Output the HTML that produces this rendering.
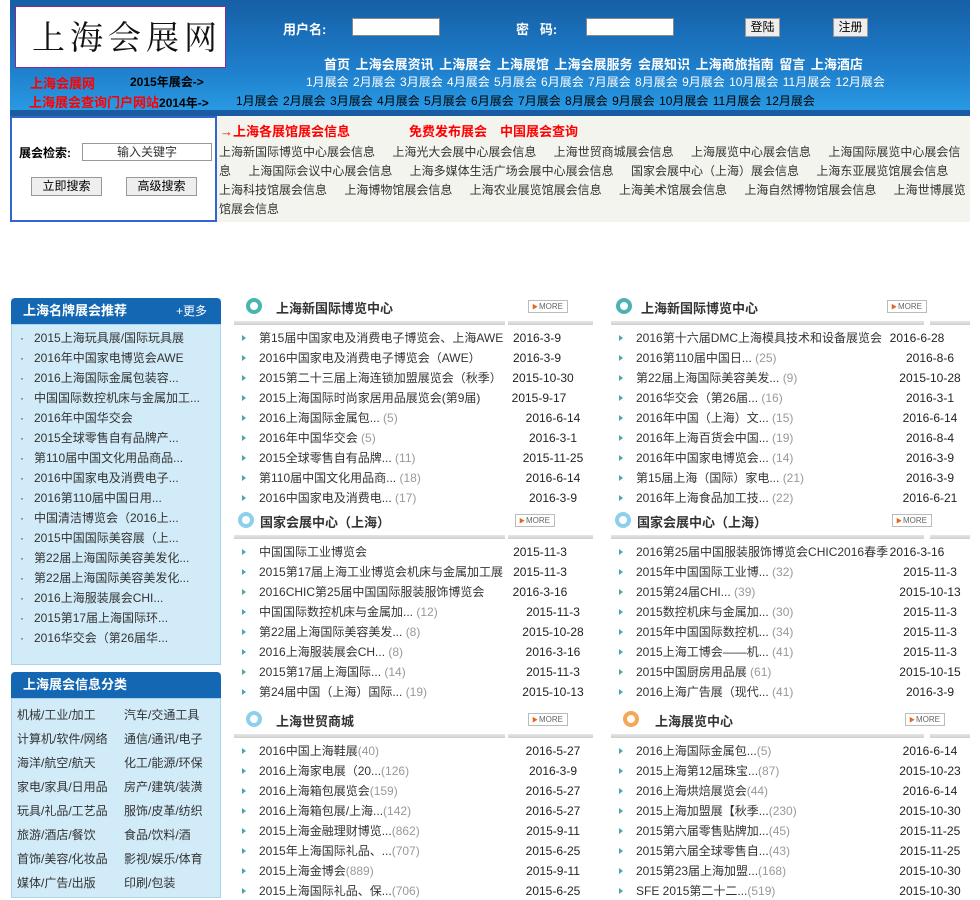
<!DOCTYPE html>
<html><head><meta charset="utf-8">
<style>
*{margin:0;padding:0;box-sizing:border-box}
body{width:980px;height:891px;overflow:hidden;background:#fff;font-family:"Liberation Sans","Noto Sans CJK SC","WenQuanYi Zen Hei",sans-serif;font-size:12px;color:#333;position:relative}
.a{position:absolute;white-space:nowrap}
#hd{position:absolute;left:10px;top:0;width:960px;height:116px;background:linear-gradient(#155fa5,#1f7fcc 60%,#2a9de6 100%)}
#hd .strip{position:absolute;left:0;top:110px;width:960px;height:6px;background:#1a5ca2}
.w{color:#fff;font-weight:bold}
.inp{position:absolute;background:#fff;border:1px solid #888;height:18px}
.btn{position:absolute;background:#eee;border:1px solid #999;font-size:12px;text-align:center;line-height:17px;color:#000}
.lbox{position:absolute;left:11px;width:210px;background:#d1ebf8;border:1px solid #aad3ee}
.lhd{position:absolute;left:11px;width:210px;height:26px;background:#1467b3;border-radius:4px 4px 0 0;color:#fff;font-weight:bold;font-size:13px;line-height:26px;padding-left:12px}
.sec{position:absolute;width:360px}
.ico{position:absolute;width:16px;height:16px;border-radius:50%;border:4px solid #4bb3b0;background:#fff}
.tt{position:absolute;font-weight:bold;font-size:13px;color:#333}
.more{position:absolute;width:40px;height:13px;border:1px solid #bbb;background:#fff;font-size:8px;line-height:11px;color:#666;padding-left:3px}
.more:before{content:"▶";color:#e8651c;font-size:6px;margin-right:1px}
.ln{position:absolute;height:4px;background:linear-gradient(#e6e6e6,#cfcfcf)}
.it{position:absolute;left:25px;font-size:12px;color:#333;line-height:17px;white-space:nowrap}
.it:before{content:"";position:absolute;left:-17px;top:5px;border-left:4px solid #4aa9a7;border-top:3px solid transparent;border-bottom:3px solid transparent}
.it i{font-style:normal;color:#999}
.d{position:absolute;width:100px;text-align:center;font-size:12px;color:#222;line-height:17px}
</style></head><body>
<div id="hd"><div class="strip"></div></div>
<div class="a" style="left:15px;top:6px;width:211px;height:62px;background:#fff;border:1px solid #8a2b8a;font-family:'Noto Serif CJK SC',serif;font-size:33px;line-height:58px;letter-spacing:5px;padding-left:16px;color:#111;overflow:hidden">上海会展网</div>
<div class="a w" style="left:283px;top:19px;font-size:13px">用户名:</div>
<div class="inp" style="left:352px;top:18px;width:88px"></div>
<div class="a w" style="left:516px;top:19px;font-size:13px">密&nbsp;&nbsp;&nbsp;码:</div>
<div class="inp" style="left:586px;top:18px;width:88px"></div>
<div class="btn" style="left:745px;top:18px;width:35px;height:19px">登陆</div>
<div class="btn" style="left:833px;top:18px;width:35px;height:19px">注册</div>
<div class="a w" style="left:324px;top:54px;font-size:13px;word-spacing:2px">首页 上海会展资讯 上海展会 上海展馆 上海会展服务 会展知识 上海商旅指南 留言 上海酒店</div>
<div class="a" style="left:30px;top:73px;color:#f00;font-weight:bold;font-size:13px">上海会展网</div>
<div class="a" style="left:130px;top:73px;color:#000;font-weight:bold;font-size:12px">2015年展会-&gt;</div>
<div class="a" style="left:306px;top:73px;color:#fff;font-size:12px;word-spacing:1px">1月展会 2月展会 3月展会 4月展会 5月展会 6月展会 7月展会 8月展会 9月展会 10月展会 11月展会 12月展会</div>
<div class="a" style="left:29px;top:92px;color:#f00;font-weight:bold;font-size:13px">上海展会查询门户网站<span style="color:#000;font-size:12px">2014年-&gt;</span></div>
<div class="a" style="left:236px;top:92px;color:#000;font-size:12px;word-spacing:1px">1月展会 2月展会 3月展会 4月展会 5月展会 6月展会 7月展会 8月展会 9月展会 10月展会 11月展会 12月展会</div>

<div class="a" style="left:10px;top:116px;width:207px;height:106px;border:2px solid #3366cc;background:#fff"></div>
<div class="a" style="left:19px;top:144px;font-weight:bold;color:#000;font-size:12px">展会检索:</div>
<div class="a" style="left:82px;top:143px;width:130px;height:18px;border:1px solid #999;text-align:center;line-height:16px;color:#333">输入关键字</div>
<div class="btn" style="left:31px;top:177px;width:71px;height:19px">立即搜索</div>
<div class="btn" style="left:126px;top:177px;width:71px;height:19px">高级搜索</div>
<div class="a" style="left:217px;top:116px;width:753px;height:106px;background:#f4f4ef"></div>
<div class="a" style="left:220px;top:121px;color:#f00;font-weight:bold;font-size:13px">→上海各展馆展会信息</div>
<div class="a" style="left:409px;top:121px;color:#f00;font-weight:bold;font-size:13px">免费发布展会</div>
<div class="a" style="left:500px;top:121px;color:#f00;font-weight:bold;font-size:13px">中国展会查询</div>
<div class="a" style="left:219px;top:143px;width:750px;white-space:normal;line-height:19px;color:#333;word-spacing:14px;font-size:12px">上海新国际博览中心展会信息 上海光大会展中心展会信息 上海世贸商城展会信息 上海展览中心展会信息 上海国际展览中心展会信息 上海国际会议中心展会信息 上海多媒体生活广场会展中心展会信息 国家会展中心（上海）展会信息 上海东亚展览馆展会信息 上海科技馆展会信息 上海博物馆展会信息 上海农业展览馆展会信息 上海美术馆展会信息 上海自然博物馆展会信息 上海世博展览馆展会信息</div>

<div class="lhd" style="top:298px">上海名牌展会推荐<span style="position:absolute;right:14px;font-weight:normal;font-size:12px">+更多</span></div>
<div class="lbox" style="top:324px;height:341px"></div>
<div class="a" style="left:20px;top:328px;line-height:20px;font-size:12px;color:#333">
·&nbsp;&nbsp;&nbsp;2015上海玩具展/国际玩具展<br>·&nbsp;&nbsp;&nbsp;2016年中国家电博览会AWE<br>·&nbsp;&nbsp;&nbsp;2016上海国际金属包装容...<br>·&nbsp;&nbsp;&nbsp;中国国际数控机床与金属加工...<br>·&nbsp;&nbsp;&nbsp;2016年中国华交会<br>·&nbsp;&nbsp;&nbsp;2015全球零售自有品牌产...<br>·&nbsp;&nbsp;&nbsp;第110届中国文化用品商品...<br>·&nbsp;&nbsp;&nbsp;2016中国家电及消费电子...<br>·&nbsp;&nbsp;&nbsp;2016第110届中国日用...<br>·&nbsp;&nbsp;&nbsp;中国清洁博览会（2016上...<br>·&nbsp;&nbsp;&nbsp;2015中国国际美容展（上...<br>·&nbsp;&nbsp;&nbsp;第22届上海国际美容美发化...<br>·&nbsp;&nbsp;&nbsp;第22届上海国际美容美发化...<br>·&nbsp;&nbsp;&nbsp;2016上海服装展会CHI...<br>·&nbsp;&nbsp;&nbsp;2015第17届上海国际环...<br>·&nbsp;&nbsp;&nbsp;2016华交会（第26届华...</div>
<div class="lhd" style="top:672px">上海展会信息分类</div>
<div class="lbox" style="top:698px;height:200px"></div>
<div class="a" style="left:17px;top:703px;line-height:24px;font-size:12px;color:#333">机械/工业/加工<br>计算机/软件/网络<br>海洋/航空/航天<br>家电/家具/日用品<br>玩具/礼品/工艺品<br>旅游/酒店/餐饮<br>首饰/美容/化妆品<br>媒体/广告/出版</div>
<div class="a" style="left:124px;top:703px;line-height:24px;font-size:12px;color:#333">汽车/交通工具<br>通信/通讯/电子<br>化工/能源/环保<br>房产/建筑/装潢<br>服饰/皮革/纺织<br>食品/饮料/酒<br>影视/娱乐/体育<br>印刷/包装</div>

<div class="ico" style="left:246px;top:298px"></div><div class="tt" style="left:276px;top:298px">上海新国际博览中心</div><div class="more" style="left:528px;top:300px">MORE</div>
<div class="ln" style="left:234px;top:321px;width:271px"></div><div class="ln" style="left:508px;top:321px;width:85px"></div>
<div class="sec" style="left:234px;top:330px">
<div class="it" style="top:0">第15届中国家电及消费电子博览会、上海AWE</div><div class="d" style="left:253px;top:0">2016-3-9</div>
<div class="it" style="top:20px">2016中国家电及消费电子博览会（AWE）</div><div class="d" style="left:253px;top:20px">2016-3-9</div>
<div class="it" style="top:40px">2015第二十三届上海连锁加盟展览会（秋季）</div><div class="d" style="left:259px;top:40px">2015-10-30</div>
<div class="it" style="top:60px">2015上海国际时尚家居用品展览会(第9届)</div><div class="d" style="left:255px;top:60px">2015-9-17</div>
<div class="it" style="top:80px">2016上海国际金属包... <i>(5)</i></div><div class="d" style="left:269px;top:80px">2016-6-14</div>
<div class="it" style="top:100px">2016年中国华交会 <i>(5)</i></div><div class="d" style="left:269px;top:100px">2016-3-1</div>
<div class="it" style="top:120px">2015全球零售自有品牌... <i>(11)</i></div><div class="d" style="left:269px;top:120px">2015-11-25</div>
<div class="it" style="top:140px">第110届中国文化用品商... <i>(18)</i></div><div class="d" style="left:269px;top:140px">2016-6-14</div>
<div class="it" style="top:160px">2016中国家电及消费电... <i>(17)</i></div><div class="d" style="left:269px;top:160px">2016-3-9</div>
</div>
<div class="ico" style="left:238px;top:512px;border-color:#8cd0ec"></div><div class="tt" style="left:260px;top:512px">国家会展中心（上海）</div><div class="more" style="left:515px;top:514px">MORE</div>
<div class="ln" style="left:234px;top:535px;width:271px"></div><div class="ln" style="left:508px;top:535px;width:85px"></div>
<div class="sec" style="left:234px;top:544px">
<div class="it" style="top:0">中国国际工业博览会</div><div class="d" style="left:256px;top:0">2015-11-3</div>
<div class="it" style="top:20px">2015第17届上海工业博览会机床与金属加工展</div><div class="d" style="left:256px;top:20px">2015-11-3</div>
<div class="it" style="top:40px">2016CHIC第25届中国国际服装服饰博览会</div><div class="d" style="left:256px;top:40px">2016-3-16</div>
<div class="it" style="top:60px">中国国际数控机床与金属加... <i>(12)</i></div><div class="d" style="left:269px;top:60px">2015-11-3</div>
<div class="it" style="top:80px">第22届上海国际美容美发... <i>(8)</i></div><div class="d" style="left:269px;top:80px">2015-10-28</div>
<div class="it" style="top:100px">2016上海服装展会CH... <i>(8)</i></div><div class="d" style="left:269px;top:100px">2016-3-16</div>
<div class="it" style="top:120px">2015第17届上海国际... <i>(14)</i></div><div class="d" style="left:269px;top:120px">2015-11-3</div>
<div class="it" style="top:140px">第24届中国（上海）国际... <i>(19)</i></div><div class="d" style="left:269px;top:140px">2015-10-13</div>
</div>
<div class="ico" style="left:246px;top:711px;border-color:#8cd0ec"></div><div class="tt" style="left:276px;top:711px">上海世贸商城</div><div class="more" style="left:528px;top:713px">MORE</div>
<div class="ln" style="left:234px;top:734px;width:271px"></div><div class="ln" style="left:508px;top:734px;width:85px"></div>
<div class="sec" style="left:234px;top:743px">
<div class="it" style="top:0">2016中国上海鞋展<i>(40)</i></div><div class="d" style="left:269px;top:0">2016-5-27</div>
<div class="it" style="top:20px">2016上海家电展（20...<i>(126)</i></div><div class="d" style="left:269px;top:20px">2016-3-9</div>
<div class="it" style="top:40px">2016上海箱包展览会<i>(159)</i></div><div class="d" style="left:269px;top:40px">2016-5-27</div>
<div class="it" style="top:60px">2016上海箱包展/上海...<i>(142)</i></div><div class="d" style="left:269px;top:60px">2016-5-27</div>
<div class="it" style="top:80px">2015上海金融理财博览...<i>(862)</i></div><div class="d" style="left:269px;top:80px">2015-9-11</div>
<div class="it" style="top:100px">2015年上海国际礼品、...<i>(707)</i></div><div class="d" style="left:269px;top:100px">2015-6-25</div>
<div class="it" style="top:120px">2015上海金博会<i>(889)</i></div><div class="d" style="left:269px;top:120px">2015-9-11</div>
<div class="it" style="top:140px">2015上海国际礼品、保...<i>(706)</i></div><div class="d" style="left:269px;top:140px">2015-6-25</div>
</div>

<div class="ico" style="left:616px;top:298px"></div><div class="tt" style="left:641px;top:298px">上海新国际博览中心</div><div class="more" style="left:887px;top:300px">MORE</div>
<div class="ln" style="left:611px;top:321px;width:313px"></div><div class="ln" style="left:930px;top:321px;width:40px"></div>
<div class="sec" style="left:611px;top:330px">
<div class="it" style="top:0">2016第十六届DMC上海模具技术和设备展览会</div><div class="d" style="left:256px;top:0">2016-6-28</div>
<div class="it" style="top:20px">2016第110届中国日... <i>(25)</i></div><div class="d" style="left:269px;top:20px">2016-8-6</div>
<div class="it" style="top:40px">第22届上海国际美容美发... <i>(9)</i></div><div class="d" style="left:269px;top:40px">2015-10-28</div>
<div class="it" style="top:60px">2016华交会（第26届... <i>(16)</i></div><div class="d" style="left:269px;top:60px">2016-3-1</div>
<div class="it" style="top:80px">2016年中国（上海）文... <i>(15)</i></div><div class="d" style="left:269px;top:80px">2016-6-14</div>
<div class="it" style="top:100px">2016年上海百货会中国... <i>(19)</i></div><div class="d" style="left:269px;top:100px">2016-8-4</div>
<div class="it" style="top:120px">2016年中国家电博览会... <i>(14)</i></div><div class="d" style="left:269px;top:120px">2016-3-9</div>
<div class="it" style="top:140px">第15届上海（国际）家电... <i>(21)</i></div><div class="d" style="left:269px;top:140px">2016-3-9</div>
<div class="it" style="top:160px">2016年上海食品加工技... <i>(22)</i></div><div class="d" style="left:269px;top:160px">2016-6-21</div>
</div>
<div class="ico" style="left:615px;top:512px;border-color:#8cd0ec"></div><div class="tt" style="left:637px;top:512px">国家会展中心（上海）</div><div class="more" style="left:892px;top:514px">MORE</div>
<div class="ln" style="left:611px;top:535px;width:313px"></div><div class="ln" style="left:930px;top:535px;width:40px"></div>
<div class="sec" style="left:611px;top:544px">
<div class="it" style="top:0">2016第25届中国服装服饰博览会CHIC2016春季</div><div class="d" style="left:256px;top:0">2016-3-16</div>
<div class="it" style="top:20px">2015年中国国际工业博... <i>(32)</i></div><div class="d" style="left:269px;top:20px">2015-11-3</div>
<div class="it" style="top:40px">2015第24届CHI... <i>(39)</i></div><div class="d" style="left:269px;top:40px">2015-10-13</div>
<div class="it" style="top:60px">2015数控机床与金属加... <i>(30)</i></div><div class="d" style="left:269px;top:60px">2015-11-3</div>
<div class="it" style="top:80px">2015年中国国际数控机... <i>(34)</i></div><div class="d" style="left:269px;top:80px">2015-11-3</div>
<div class="it" style="top:100px">2015上海工博会——机... <i>(41)</i></div><div class="d" style="left:269px;top:100px">2015-11-3</div>
<div class="it" style="top:120px">2015中国厨房用品展 <i>(61)</i></div><div class="d" style="left:269px;top:120px">2015-10-15</div>
<div class="it" style="top:140px">2016上海广告展（现代... <i>(41)</i></div><div class="d" style="left:269px;top:140px">2016-3-9</div>
</div>
<div class="ico" style="left:623px;top:711px;border-color:#f5a755"></div><div class="tt" style="left:655px;top:711px">上海展览中心</div><div class="more" style="left:905px;top:713px">MORE</div>
<div class="ln" style="left:611px;top:734px;width:313px"></div><div class="ln" style="left:930px;top:734px;width:40px"></div>
<div class="sec" style="left:611px;top:743px">
<div class="it" style="top:0">2016上海国际金属包...<i>(5)</i></div><div class="d" style="left:269px;top:0">2016-6-14</div>
<div class="it" style="top:20px">2015上海第12届珠宝...<i>(87)</i></div><div class="d" style="left:269px;top:20px">2015-10-23</div>
<div class="it" style="top:40px">2016上海烘焙展览会<i>(44)</i></div><div class="d" style="left:269px;top:40px">2016-6-14</div>
<div class="it" style="top:60px">2015上海加盟展【秋季...<i>(230)</i></div><div class="d" style="left:269px;top:60px">2015-10-30</div>
<div class="it" style="top:80px">2015第六届零售贴牌加...<i>(45)</i></div><div class="d" style="left:269px;top:80px">2015-11-25</div>
<div class="it" style="top:100px">2015第六届全球零售自...<i>(43)</i></div><div class="d" style="left:269px;top:100px">2015-11-25</div>
<div class="it" style="top:120px">2015第23届上海加盟...<i>(168)</i></div><div class="d" style="left:269px;top:120px">2015-10-30</div>
<div class="it" style="top:140px">SFE 2015第二十二...<i>(519)</i></div><div class="d" style="left:269px;top:140px">2015-10-30</div>
</div>
</body></html>
